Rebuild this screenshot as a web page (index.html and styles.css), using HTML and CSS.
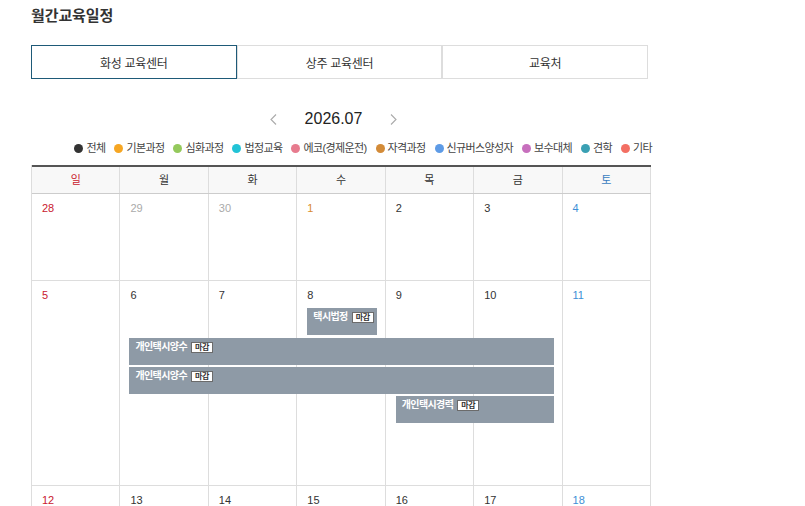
FILE: index.html
```html
<!DOCTYPE html>
<html lang="ko">
<head>
<meta charset="utf-8">
<title>월간교육일정</title>
<link rel="stylesheet" href="styles.css">
</head>
<body>
<div class="page">
  <h1 class="title">월간교육일정</h1>

  <div class="tabs">
    <button class="tab active">화성 교육센터</button>
    <button class="tab">상주 교육센터</button>
    <button class="tab">교육처</button>
  </div>

  <div class="month-nav">
    <button class="arrow" aria-label="이전 달">
      <svg width="7" height="11" viewBox="0 0 7 11"><polyline points="6,0.5 1,5.5 6,10.5" fill="none" stroke="#aaa" stroke-width="1.1"/></svg>
    </button>
    <span class="month">2026.07</span>
    <button class="arrow" aria-label="다음 달">
      <svg width="7" height="11" viewBox="0 0 7 11"><polyline points="1,0.5 6,5.5 1,10.5" fill="none" stroke="#aaa" stroke-width="1.1"/></svg>
    </button>
  </div>

  <ul class="legend">
    <li class="legend-item"><span class="dot dot-all"></span>전체</li>
    <li class="legend-item"><span class="dot dot-basic"></span>기본과정</li>
    <li class="legend-item"><span class="dot dot-adv"></span>심화과정</li>
    <li class="legend-item"><span class="dot dot-legal"></span>법정교육</li>
    <li class="legend-item"><span class="dot dot-eco"></span>에코(경제운전)</li>
    <li class="legend-item"><span class="dot dot-cert"></span>자격과정</li>
    <li class="legend-item"><span class="dot dot-bus"></span>신규버스양성자</li>
    <li class="legend-item"><span class="dot dot-sub"></span>보수대체</li>
    <li class="legend-item"><span class="dot dot-tour"></span>견학</li>
    <li class="legend-item"><span class="dot dot-etc"></span>기타</li>
  </ul>

  <div class="calendar">
    <div class="dow">
      <div class="dow-cell sun">일</div>
      <div class="dow-cell">월</div>
      <div class="dow-cell">화</div>
      <div class="dow-cell">수</div>
      <div class="dow-cell">목</div>
      <div class="dow-cell">금</div>
      <div class="dow-cell sat">토</div>
    </div>

    <div class="week week-plain">
      <div class="day"><span class="num sun">28</span></div>
      <div class="day"><span class="num other">29</span></div>
      <div class="day"><span class="num other">30</span></div>
      <div class="day"><span class="num holiday">1</span></div>
      <div class="day"><span class="num">2</span></div>
      <div class="day"><span class="num">3</span></div>
      <div class="day"><span class="num sat">4</span></div>
    </div>

    <div class="week week-events">
      <div class="day"><span class="num sun">5</span></div>
      <div class="day"><span class="num">6</span></div>
      <div class="day"><span class="num">7</span></div>
      <div class="day"><span class="num">8</span></div>
      <div class="day"><span class="num">9</span></div>
      <div class="day"><span class="num">10</span></div>
      <div class="day"><span class="num sat">11</span></div>

      <div class="ev lane1 col-wed"><span class="ev-title">택시법정</span><span class="badge">마감</span></div>
      <div class="ev lane2 col-mon-fri"><span class="ev-title">개인택시양수</span><span class="badge">마감</span></div>
      <div class="ev lane3 col-mon-fri"><span class="ev-title">개인택시양수</span><span class="badge">마감</span></div>
      <div class="ev lane4 col-thu-fri"><span class="ev-title">개인택시경력</span><span class="badge">마감</span></div>
    </div>

    <div class="week week-plain">
      <div class="day"><span class="num sun">12</span></div>
      <div class="day"><span class="num">13</span></div>
      <div class="day"><span class="num">14</span></div>
      <div class="day"><span class="num">15</span></div>
      <div class="day"><span class="num">16</span></div>
      <div class="day"><span class="num">17</span></div>
      <div class="day"><span class="num sat">18</span></div>
    </div>
  </div>
</div>
</body>
</html>
```

FILE: styles.css
```css
html {
  overflow: hidden;
}

body {
  margin: 0;
  background: #fff;
  color: #333;
  font-family: "Liberation Sans", "Noto Sans CJK KR", sans-serif;
}

.page {
  width: 620px;
  margin-left: 31px;
  padding-top: 6px;
}

.title {
  margin: 0;
  font-size: 15px;
  line-height: 20px;
  font-weight: 700;
  letter-spacing: -0.1px;
  color: #333;
}

/* tabs */
.tabs {
  display: flex;
  width: 617px;
  margin-top: 19px;
}

.tab {
  flex: 1;
  height: 34px;
  margin: 0;
  padding: 0;
  background: #fff;
  border: 1px solid #ddd;
  font-family: inherit;
  font-size: 12px;
  letter-spacing: -0.3px;
  color: #333;
  cursor: pointer;
}

.tab.active {
  border-color: #1e5a78;
}

/* month nav */
.month-nav {
  display: flex;
  align-items: center;
  justify-content: center;
  gap: 28px;
  height: 20px;
  margin-top: 30px;
  padding-right: 15px;
}

.arrow {
  display: flex;
  align-items: center;
  padding: 0;
  border: 0;
  background: none;
  cursor: pointer;
}

.month {
  font-size: 16px;
  line-height: 20px;
  color: #222;
}

/* legend */
.legend {
  display: flex;
  justify-content: flex-end;
  gap: 9px;
  margin: 12px -1px 0 0;
  padding: 0;
  list-style: none;
  height: 14px;
}

.legend-item {
  display: flex;
  align-items: center;
  gap: 3px;
  font-size: 11px;
  line-height: 14px;
  letter-spacing: -0.62px;
  color: #444;
}

.dot {
  width: 9px;
  height: 9px;
  border-radius: 50%;
  flex: none;
}

.dot-all { background: #333; }
.dot-basic { background: #f6a623; }
.dot-adv { background: #94c95c; }
.dot-legal { background: #22c3d6; }
.dot-eco { background: #e77b8e; }
.dot-cert { background: #d38b38; }
.dot-bus { background: #5e9be6; }
.dot-sub { background: #c76fbd; }
.dot-tour { background: #3aa0b3; }
.dot-etc { background: #f36f63; }

/* calendar */
.calendar {
  margin-top: 10px;
  border-left: 1px solid #ddd;
}

.dow {
  display: grid;
  grid-template-columns: repeat(7, 1fr);
  border-top: 2px solid #555;
  border-bottom: 1px solid #ccc;
  background: #f8f8f8;
}

.dow-cell {
  height: 26px;
  line-height: 26px;
  text-align: center;
  font-size: 11px;
  color: #333;
  border-right: 1px solid #ddd;
}

.dow-cell.sun { color: #c9182e; }
.dow-cell.sat { color: #3a7dc0; }

.week {
  display: grid;
  grid-template-columns: repeat(7, 1fr);
  border-bottom: 1px solid #ddd;
}

.week-plain {
  grid-template-rows: 86px;
}

.week-events {
  grid-template-rows: 27px 30px 29px 29px 29px 60px;
}

.day {
  grid-row: 1 / -1;
  border-right: 1px solid #ddd;
  padding: 9px 10px 0;
  font-size: 11px;
  line-height: 11px;
}

.day:nth-child(1) { grid-column: 1; }
.day:nth-child(2) { grid-column: 2; }
.day:nth-child(3) { grid-column: 3; }
.day:nth-child(4) { grid-column: 4; }
.day:nth-child(5) { grid-column: 5; }
.day:nth-child(6) { grid-column: 6; }
.day:nth-child(7) { grid-column: 7; }

.num { color: #333; }
.num.sun { color: #c9182e; }
.num.sat { color: #3d8fd6; }
.num.other { color: #aaa; }
.num.holiday { color: #d98b2e; }

/* events */
.ev {
  display: flex;
  align-self: start;
  align-items: flex-start;
  gap: 4px;
  height: 27px;
  min-width: 0;
  margin: 0 9px 0 10px;
  padding: 3px 0 0 6px;
  box-sizing: border-box;
  background: #8e9aa6;
  white-space: nowrap;
  overflow: hidden;
}

.lane1 { grid-row: 2; }
.lane2 { grid-row: 3; }
.lane3 { grid-row: 4; }
.lane4 { grid-row: 5; }

.col-wed { grid-column: 4 / 5; }
.col-mon-fri { grid-column: 2 / 7; margin-left: 9px; }
.col-thu-fri { grid-column: 5 / 7; }

.ev-title {
  flex: none;
  font-size: 10px;
  line-height: 12px;
  font-weight: 700;
  letter-spacing: -0.6px;
  color: #fff;
}

.badge {
  flex: none;
  margin-top: 1px;
  padding: 0 3px;
  background: #fff;
  border: 1px solid #6b6b6b;
  font-size: 8px;
  line-height: 9px;
  letter-spacing: -0.3px;
  color: #333;
  font-weight: 700;
}
```
